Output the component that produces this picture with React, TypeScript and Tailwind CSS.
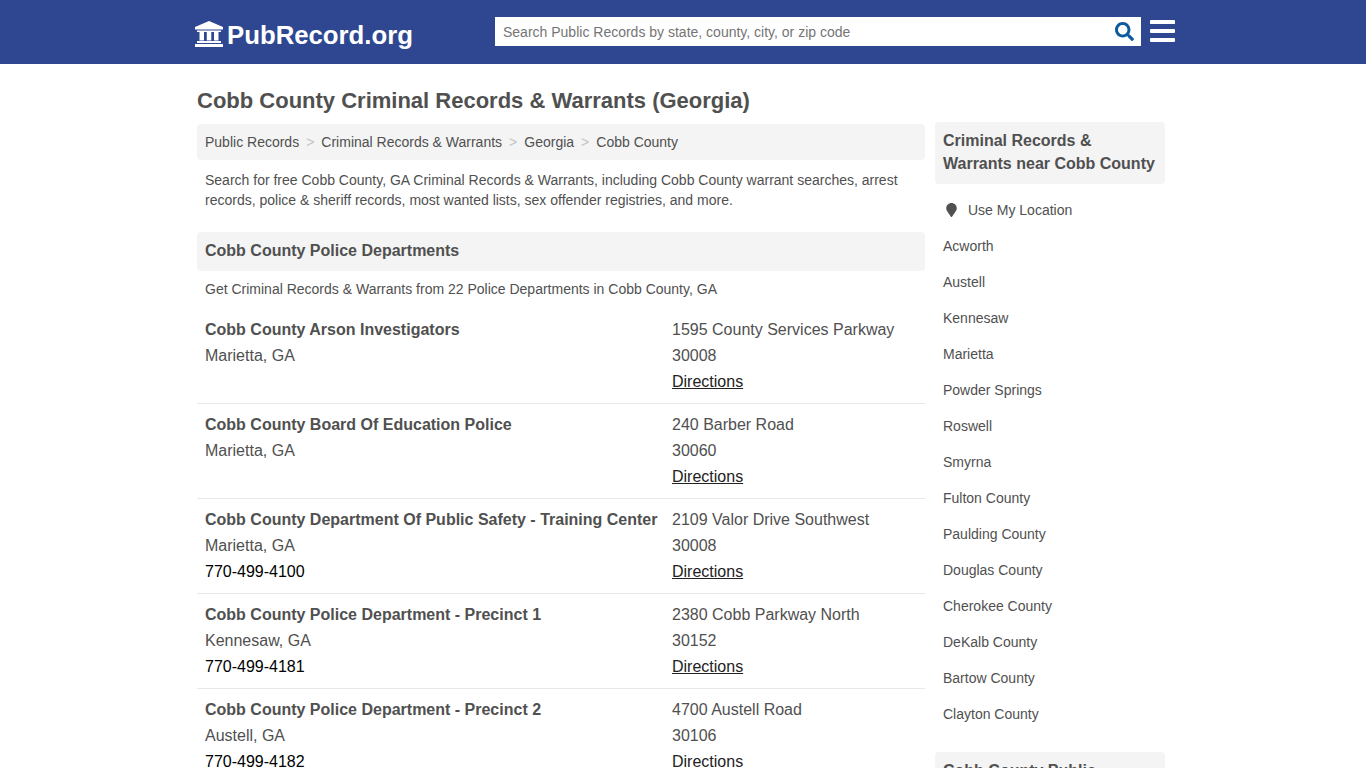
import { FaSearch, FaBars, FaMapMarker } from "react-icons/fa";

const rows = [
  ["Cobb County Arson Investigators", "Marietta, GA", "", "1595 County Services Parkway", "30008"],
  ["Cobb County Board Of Education Police", "Marietta, GA", "", "240 Barber Road", "30060"],
  ["Cobb County Department Of Public Safety - Training Center", "Marietta, GA", "770-499-4100", "2109 Valor Drive Southwest", "30008"],
  ["Cobb County Police Department - Precinct 1", "Kennesaw, GA", "770-499-4181", "2380 Cobb Parkway North", "30152"],
  ["Cobb County Police Department - Precinct 2", "Austell, GA", "770-499-4182", "4700 Austell Road", "30106"],
];

const near = ["Acworth", "Austell", "Kennesaw", "Marietta", "Powder Springs", "Roswell", "Smyrna", "Fulton County", "Paulding County", "Douglas County", "Cherokee County", "DeKalb County", "Bartow County", "Clayton County"];
const crumbs = ["Public Records", "Criminal Records & Warrants", "Georgia", "Cobb County"];

function Bank() {
  return (
    <svg viewBox="0 0 28 26" className="mt-[4px] h-[26px] w-[28px] shrink-0" fill="currentColor">
      <path d="M14 0 28 6v2.5H0V6z" />
      <path d="M2 9.5h24V11H2z" />
      <path d="M4.500 11h4.500v8.500H4.500zM11.800 11h4.500v8.500h-4.500zM19 11h4.500v8.500H19z" />
      <path d="M2 20h24v2H2zM0 23h28v3H0z" />
    </svg>
  );
}

export default function App() {
  return (
    <div className="h-[768px] overflow-hidden bg-white font-['Liberation_Sans',Arial,sans-serif] text-[#505050]">
      <header className="h-16 bg-[#2e4790]">
        <div className="mx-auto flex w-[1366px] items-start pl-[195px]">
          <div className="flex h-16 w-[300px] items-center text-white">
            <Bank />
            <span className="ml-1 mt-[6px] text-[25.75px] font-bold leading-8">PubRecord.org</span>
          </div>
          <div className="mt-[17px] flex h-[29px] w-[646px] items-center justify-between bg-white pl-2 pr-[7px]">
            <span className="text-sm text-[#757575]">Search Public Records by state, county, city, or zip code</span>
            <FaSearch className="h-[19px] w-[19px] text-[#0b5a9e]" />
          </div>
          <FaBars className="ml-[9px] mt-[16px] h-[30px] w-[25px] text-white" />
        </div>
      </header>
      <div className="ml-[197px] w-[968px]">
        <h1 className="pb-[10px] pt-[24px] text-[22px] font-bold leading-[26px]">Cobb County Criminal Records &amp; Warrants (Georgia)</h1>
        <div className="flex gap-[10px]">
          <main className="w-[728px]">
            <nav className="flex h-9 items-center rounded bg-[#f4f4f4] px-2 text-sm">
              {crumbs.map((c, i) => (
                <span key={c} className="flex items-center">
                  {i > 0 && <span className="px-[7px] text-[#c4c4c4]">&gt;</span>}
                  {c}
                </span>
              ))}
            </nav>
            <p className="px-2 pb-[22px] pt-[10px] text-sm leading-5">
              Search for free Cobb County, GA Criminal Records &amp; Warrants, including Cobb County warrant searches, arrest records, police &amp; sheriff records, most wanted lists, sex offender registries, and more.
            </p>
            <h2 className="rounded bg-[#f4f4f4] px-2 pb-[10px] pt-2 text-base font-bold leading-[21px]">Cobb County Police Departments</h2>
            <p className="px-2 pb-[10px] pt-2 text-sm leading-5">Get Criminal Records &amp; Warrants from 22 Police Departments in Cobb County, GA</p>
            {rows.map((r) => (
              <div key={r[0]} className="flex border-b border-[#e8e8e8] pb-2 pt-2 text-base leading-[26px]">
                <div className="w-[475px] pl-2">
                  <div className="font-bold">{r[0]}</div>
                  <div>{r[1]}</div>
                  <div className="text-black">{r[2]}</div>
                </div>
                <div className="flex-1">
                  <div>{r[3]}</div>
                  <div>{r[4]}</div>
                  <div className="text-[#222] underline">Directions</div>
                </div>
              </div>
            ))}
          </main>
          <aside className="-mt-[2px] w-[230px]">
            <h2 className="rounded bg-[#f4f4f4] px-2 pb-[9px] pt-[7px] text-base font-bold leading-[23px]">Criminal Records &amp; Warrants near Cobb County</h2>
            <ul className="pb-5 pt-2 text-sm">
              <li className="flex h-9 items-center pl-[11px]">
                <FaMapMarker className="h-[14px] w-[11px] text-[#505050]" />
                <span className="ml-[11px]">Use My Location</span>
              </li>
              {near.map((n) => (
                <li key={n} className="flex h-9 items-center pl-2">{n}</li>
              ))}
            </ul>
            <h2 className="rounded bg-[#f4f4f4] px-2 pb-[9px] pt-[7px] text-base font-bold leading-[23px]">Cobb County Public Records</h2>
          </aside>
        </div>
      </div>
    </div>
  );
}
